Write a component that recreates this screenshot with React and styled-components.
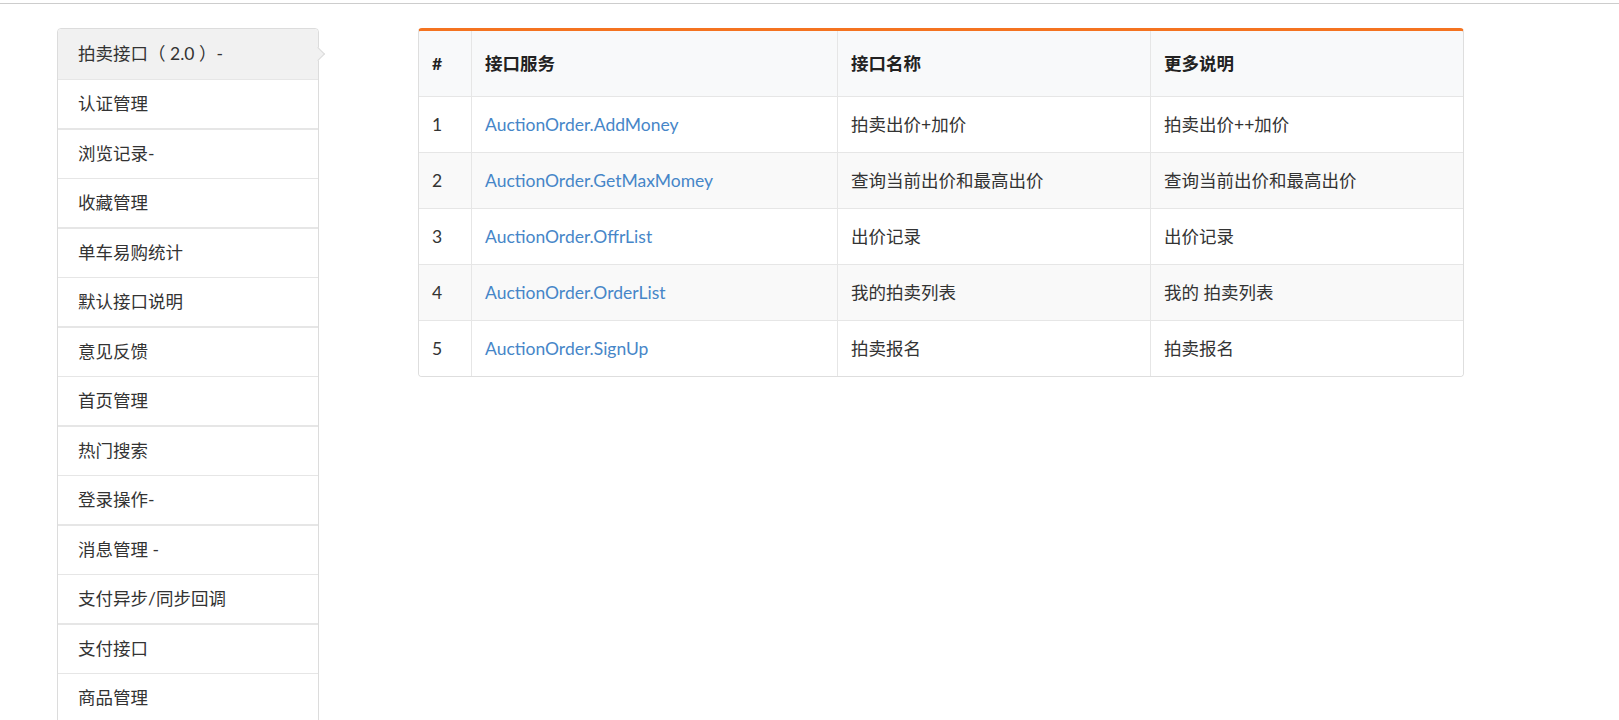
import React from "react";
import styled, { createGlobalStyle } from "styled-components";

const Global = createGlobalStyle`
  html, body { margin: 0; padding: 0; background: #fff; overflow: hidden; }
  body {
    font-family: Lato, "Noto Sans CJK SC", "Noto Sans", sans-serif;
    font-size: 17.5px;
    color: #333;
  }
  * { box-sizing: border-box; }
`;

const TopRule = styled.div`
  margin-top: 3px;
  height: 1px;
  background: #cdcdcd;
`;

const Main = styled.div`
  display: flex;
  align-items: flex-start;
  gap: 99px;
  padding: 24px 0 0 57px;
`;

const Sidebar = styled.ul`
  list-style: none;
  margin: 0;
  padding: 0;
  width: 262px;
  flex: none;
  border: 1px solid #dcdcdc;
  border-radius: 4px;
  background: #fff;
`;

const Item = styled.li`
  position: relative;
  display: flex;
  align-items: center;
  height: ${(p) => (p.$active ? 51 : p.$thick ? 50 : 49)}px;
  padding-left: 20px;
  line-height: 1;
  white-space: pre;
  color: #333;
  background: ${(p) => (p.$active ? "#f1f1f1" : "#fff")};
  border-bottom: ${(p) => (p.$thick ? 2 : 1)}px solid #e6e6e6;
  border-radius: ${(p) => (p.$active ? "4px 4px 0 0" : "0")};

  ${(p) =>
    p.$active &&
    `
    &::after {
      content: "";
      position: absolute;
      right: -5px;
      top: 50%;
      width: 9px;
      height: 9px;
      margin-top: -5px;
      background: #f1f1f1;
      border-top: 1px solid #dcdcdc;
      border-right: 1px solid #dcdcdc;
      transform: rotate(45deg);
    }
  `}
`;

const TableCard = styled.div`
  width: 1046px;
  flex: none;
  border: 1px solid #dedede;
  border-top: 3px solid #f47320;
  border-radius: 4px;
  overflow: hidden;
`;

const Table = styled.table`
  width: 100%;
  border-collapse: separate;
  border-spacing: 0;
  table-layout: fixed;
`;

const Th = styled.th`
  text-align: left;
  font-weight: 700;
  color: #222;
  background: #f8f9fa;
  padding: 19.5px 13px;
  line-height: 26px;
  border-right: 1px solid #e6e6e6;
  &:last-child { border-right: none; }
`;

const Row = styled.tr`
  background: ${(p) => (p.$striped ? "#f9f9f9" : "#fff")};
`;

const Td = styled.td`
  padding: 14.5px 13px;
  line-height: 26px;
  color: #333;
  border-top: 1px solid #e6e6e6;
  border-right: 1px solid #e6e6e6;
  white-space: pre;
  &:last-child { border-right: none; }
`;

const Link = styled.a`
  color: #4686c8;
  text-decoration: none;
`;

const menu = [
  "拍卖接口（ 2.0 ）-",
  "认证管理",
  "浏览记录-",
  "收藏管理",
  "单车易购统计",
  "默认接口说明",
  "意见反馈",
  "首页管理",
  "热门搜索",
  "登录操作-",
  "消息管理 -",
  "支付异步/同步回调",
  "支付接口",
  "商品管理",
];

const rows = [
  ["1", "AuctionOrder.AddMoney", "拍卖出价+加价", "拍卖出价++加价"],
  ["2", "AuctionOrder.GetMaxMomey", "查询当前出价和最高出价", "查询当前出价和最高出价"],
  ["3", "AuctionOrder.OffrList", "出价记录", "出价记录"],
  ["4", "AuctionOrder.OrderList", "我的拍卖列表", "我的 拍卖列表"],
  ["5", "AuctionOrder.SignUp", "拍卖报名", "拍卖报名"],
];

export default function App() {
  return (
    <>
      <Global />
      <TopRule />
      <Main>
        <Sidebar>
          {menu.map((m, i) => (
            <Item key={m} $active={i === 0} $thick={i % 2 === 1}>
              {m}
            </Item>
          ))}
        </Sidebar>
        <TableCard>
          <Table>
            <colgroup>
              <col style={{ width: 53 }} />
              <col style={{ width: 366 }} />
              <col style={{ width: 313 }} />
              <col />
            </colgroup>
            <thead>
              <tr>
                <Th>#</Th>
                <Th>接口服务</Th>
                <Th>接口名称</Th>
                <Th>更多说明</Th>
              </tr>
            </thead>
            <tbody>
              {rows.map((r, i) => (
                <Row key={r[0]} $striped={i % 2 === 1}>
                  <Td>{r[0]}</Td>
                  <Td>
                    <Link href="#">{r[1]}</Link>
                  </Td>
                  <Td>{r[2]}</Td>
                  <Td>{r[3]}</Td>
                </Row>
              ))}
            </tbody>
          </Table>
        </TableCard>
      </Main>
    </>
  );
}
